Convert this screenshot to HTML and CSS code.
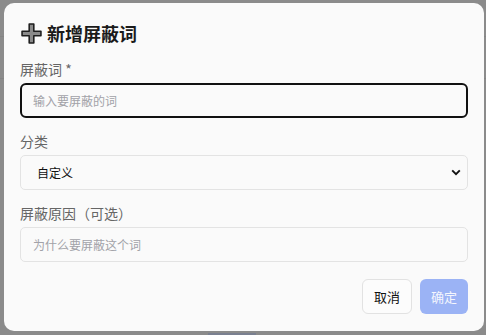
FILE: index.html
```html
<!DOCTYPE html>
<html lang="zh-CN">
<head>
    <meta charset="UTF-8">
    <meta name="viewport" content="width=device-width, initial-scale=1.0">
    <title>新增屏蔽词</title>
    <link rel="stylesheet" href="styles.css">
</head>
<body>
    <div class="backdrop">
        <div class="line line-top"></div>
        <div class="line line-mid"></div>
        <div class="under-btn"></div>

        <div class="dialog">
            <h2 class="dialog-title">
                <svg class="plus-icon" width="21" height="21" viewBox="0 0 20 20">
                    <path d="M7.8 1h4.4v6.8H19v4.4h-6.8V19H7.8v-6.8H1V7.8h6.8z" fill="#8a8a8a" stroke="#1e1e1e" stroke-width="1.5" stroke-linejoin="round"/>
                </svg>
                新增屏蔽词
            </h2>

            <div class="field">
                <label class="field-label">屏蔽词 *</label>
                <input class="field-input focused" type="text" placeholder="输入要屏蔽的词">
            </div>

            <div class="field">
                <label class="field-label">分类</label>
                <div class="select">
                    <span>自定义</span>
                    <svg class="chevron" width="10" height="7" viewBox="0 0 10 7">
                        <path d="M1.2 1.4L5 5.2l3.8-3.8" fill="none" stroke="#111" stroke-width="1.9"/>
                    </svg>
                </div>
            </div>

            <div class="field">
                <label class="field-label">屏蔽原因（可选）</label>
                <input class="field-input" type="text" placeholder="为什么要屏蔽这个词">
            </div>

            <div class="actions">
                <button class="btn btn-cancel">取消</button>
                <button class="btn btn-ok">确定</button>
            </div>
        </div>
    </div>
</body>
</html>
```

FILE: styles.css
```css
* {
    box-sizing: border-box;
}

html, body {
    margin: 0;
    padding: 0;
}

body {
    font-family: "Noto Sans CJK SC", "Noto Sans", sans-serif;
    background: #8b8b8b;
    width: 486px;
    height: 335px;
    overflow: hidden;
}

.backdrop {
    position: relative;
    height: 335px;
    padding: 3px 2px 0 4px;
}

.line {
    position: absolute;
    left: 0;
    right: 0;
    height: 1px;
    background: #848484;
}

.line-top {
    top: 36px;
}

.line-mid {
    top: 78px;
}

.under-btn {
    position: absolute;
    left: 208px;
    top: 333px;
    width: 48px;
    height: 4px;
    background: #7a8090;
}

.dialog {
    position: relative;
    width: 480px;
    height: 328px;
    background: #fafafa;
    border-radius: 10px;
    padding: 16px 16px 0 16px;
}

.dialog-title {
    display: flex;
    align-items: center;
    gap: 5px;
    margin: 0 0 12px 0;
    height: 28px;
    font-size: 18px;
    font-weight: bold;
    color: #1a1a1a;
}

.plus-icon {
    margin-left: 1px;
}

.field {
    margin-bottom: 13px;
}

.field-label {
    display: block;
    font-size: 14px;
    line-height: 21px;
    color: #666;
    margin-bottom: 3px;
}

.field-input {
    display: block;
    width: 448px;
    height: 35px;
    border: 1px solid #e3e3e3;
    border-radius: 5px;
    background: #fafafa;
    padding: 0 12px;
    font-family: inherit;
    font-size: 12px;
    outline: none;
}

.field-input::placeholder {
    color: #a2a2a8;
}

.field-input.focused {
    border: 2px solid #111;
    border-radius: 6px;
    padding: 0 11px;
}

.select {
    display: flex;
    align-items: center;
    justify-content: space-between;
    width: 448px;
    height: 35px;
    border: 1px solid #e3e3e3;
    border-radius: 5px;
    background: #fafafa;
    padding: 0 6px 0 16px;
    font-size: 12px;
    color: #111;
}

.actions {
    display: flex;
    justify-content: flex-end;
    gap: 8px;
    margin-top: 17px;
}

.btn {
    height: 35px;
    border-radius: 6px;
    font-family: inherit;
    font-size: 13px;
    padding: 0;
    white-space: nowrap;
}

.btn-cancel {
    width: 50px;
    background: #fcfcfc;
    border: 1px solid #e2e2e2;
    color: #111;
}

.btn-ok {
    width: 48px;
    background: #9bb3f5;
    border: none;
    color: #f4f6fd;
}
```
